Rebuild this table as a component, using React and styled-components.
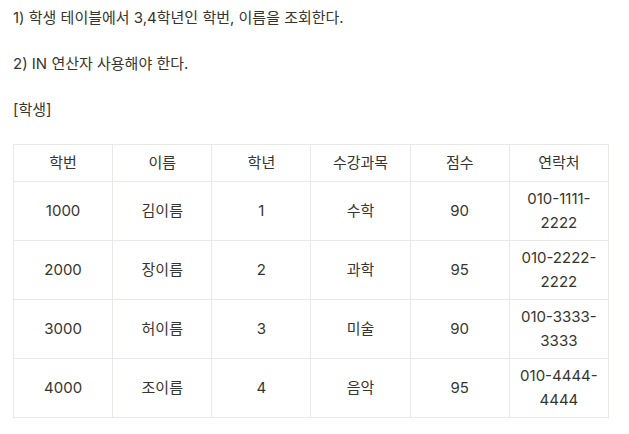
import React from 'react';
import styled, { createGlobalStyle } from 'styled-components';

const GlobalStyle = createGlobalStyle`
  body {
    margin: 0;
    background: #ffffff;
    color: rgb(55, 53, 47);
    font-family: Inter, "Noto Sans CJK KR", sans-serif;
  }
`;

const Page = styled.div`
  padding: 6px 13px 0;
  width: 596px;
`;

const Line = styled.p`
  margin: 0 0 22px;
  font-size: 15px;
  line-height: 24px;
`;

const Table = styled.table`
  margin-top: 21px;
  width: 596px;
  border-collapse: collapse;
  table-layout: fixed;
  font-size: 15px;
  line-height: 24px;
`;

const Head = styled.th`
  font-weight: 400;
  height: 36px;
  padding: 0 9px;
  border: 1px solid rgb(233, 233, 231);
  text-align: center;
`;

const Cell = styled.td`
  height: 58px;
  padding: 0 9px;
  border: 1px solid rgb(233, 233, 231);
  text-align: center;
  vertical-align: middle;
`;

const columns = ['학번', '이름', '학년', '수강과목', '점수', '연락처'];

const students = [
  ['1000', '김이름', '1', '수학', '90', '010-1111-2222'],
  ['2000', '장이름', '2', '과학', '95', '010-2222-2222'],
  ['3000', '허이름', '3', '미술', '90', '010-3333-3333'],
  ['4000', '조이름', '4', '음악', '95', '010-4444-4444'],
];

export default function App() {
  return (
    <Page>
      <GlobalStyle />
      <Line>1) 학생 테이블에서 3,4학년인 학번, 이름을 조회한다.</Line>
      <Line>2) IN 연산자 사용해야 한다.</Line>
      <Line>[학생]</Line>
      <Table>
        <thead>
          <tr>
            {columns.map((c) => (
              <Head key={c}>{c}</Head>
            ))}
          </tr>
        </thead>
        <tbody>
          {students.map((row) => (
            <tr key={row[0]}>
              {row.map((v, i) => (
                <Cell key={i}>{v}</Cell>
              ))}
            </tr>
          ))}
        </tbody>
      </Table>
    </Page>
  );
}
